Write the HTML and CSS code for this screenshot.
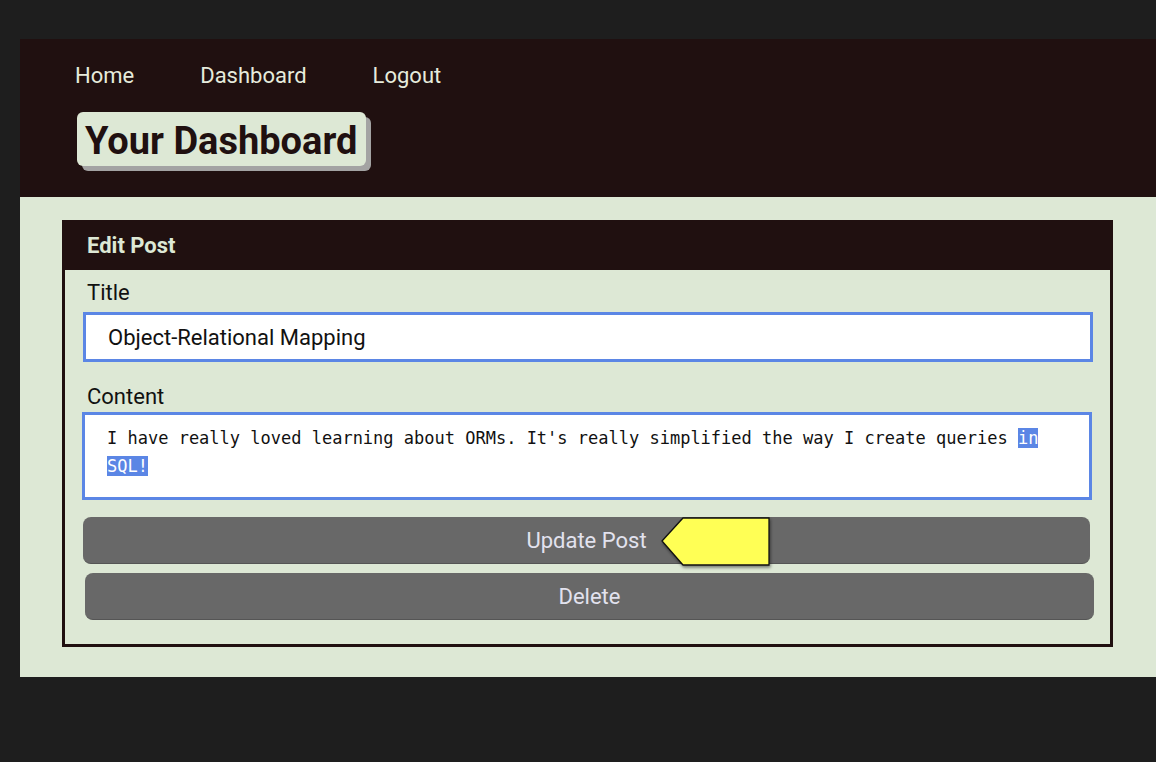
FILE: index.html
```html
<!DOCTYPE html>
<html lang="en">
<head>
<meta charset="utf-8">
<title>Your Dashboard</title>
<link rel="stylesheet" href="styles.css">
</head>
<body>
<div class="page">
  <header class="site-header">
    <nav class="nav">
      <a href="#" class="nav-link">Home</a>
      <a href="#" class="nav-link">Dashboard</a>
      <a href="#" class="nav-link">Logout</a>
    </nav>
    <h1 class="badge">Your Dashboard</h1>
  </header>
  <main class="main">
    <section class="card">
      <div class="card-head">Edit Post</div>
      <form class="card-body">
        <label class="label">Title</label>
        <div class="field">Object-Relational Mapping</div>
        <label class="label label-content">Content</label>
        <div class="area">I have really loved learning about ORMs. It's really simplified the way I create queries <span class="sel">in</span> <span class="sel">SQL!</span></div>
        <div class="btn-wrap">
          <button type="button" class="btn btn-update">Update Post</button>
          <svg class="pointer" width="114" height="54" viewBox="0 0 114 54">
            <defs>
              <filter id="sh" x="-20%" y="-20%" width="140%" height="150%">
                <feDropShadow dx="1" dy="2" stdDeviation="1.5" flood-color="#000" flood-opacity="0.45"/>
              </filter>
            </defs>
            <polygon points="2,24 23,1 109,1 109,48 23,48" fill="#ffff55" stroke="#111" stroke-width="1.3" filter="url(#sh)"/>
          </svg>
        </div>
        <button type="button" class="btn btn-delete">Delete</button>
      </form>
    </section>
  </main>
</div>
</body>
</html>
```
FILE: styles.css
```css
* { box-sizing: border-box; }
html, body { margin: 0; padding: 0; }
body {
  background: #1e1e1e;
  font-family: Roboto, "Noto Sans", sans-serif;
  padding: 39px 0 0 20px;
  height: 762px;
  overflow: hidden;
}
.page { width: 1136px; }
.site-header {
  background: #201010;
  height: 158px;
  padding: 25px 0 0 55px;
}
.nav { display: flex; align-items: center; gap: 66px; height: 24px; }
.nav-link {
  color: #e6ebdc;
  text-decoration: none;
  font-size: 22px;
  line-height: 24px;
}
.badge {
  display: inline-block;
  margin: 24px 0 0 2px;
  background: #dde8d5;
  color: #201010;
  font-size: 38px;
  font-weight: 700;
  line-height: 54px;
  height: 54px;
  padding: 2px 9px 0 8px;
  border-radius: 6px;
  box-shadow: 5px 5px 0 #a3a3a3;
  overflow: hidden;
}
.main {
  background: #dde8d5;
  padding: 23px 43px 30px 42px;
}
.card { border: 3px solid #201010; background: #dde8d5; }
.card-head {
  background: #201010;
  color: #dde8d5;
  font-weight: 700;
  font-size: 22px;
  height: 47px;
  line-height: 46px;
  padding-left: 22px;
}
.card-body {
  padding: 8px 17px 24px 18px;
  display: flex;
  flex-direction: column;
}
.label {
  font-size: 22px;
  line-height: 28px;
  color: #111;
  padding: 1px 0 0 4px;
  height: 28px;
  margin-bottom: 6px;
}
.label-content { margin-top: 20px; margin-bottom: 2px; }
.field {
  height: 50px;
  border: 3px solid #5b86e5;
  background: #fff;
  font-size: 22px;
  line-height: 46px;
  padding-left: 22px;
  color: #111;
}
.area {
  height: 88px;
  margin-left: -1px;
  margin-right: 1px;
  border: 3px solid #5b86e5;
  background: #fff;
  font-family: "DejaVu Sans Mono", "Liberation Mono", monospace;
  font-size: 17px;
  line-height: 28px;
  padding: 9px 22px 0 22px;
  color: #111;
}
.sel { background: #5b86e5; color: #fff; }
.btn-wrap { position: relative; margin-top: 17px; margin-right: 3px; }
.btn {
  display: block;
  width: 100%;
  height: 47px;
  border: none;
  border-radius: 8px;
  background: #686868;
  color: #e2e2ee;
  font-family: Roboto, "Noto Sans", sans-serif;
  font-size: 22px;
  padding-top: 2px;
  border-bottom: 1px solid #555;
}
.btn-delete { margin-top: 9px; margin-left: 2px; width: calc(100% - 1px); }
.pointer {
  position: absolute;
  left: 577px;
  top: 0;
}
```
